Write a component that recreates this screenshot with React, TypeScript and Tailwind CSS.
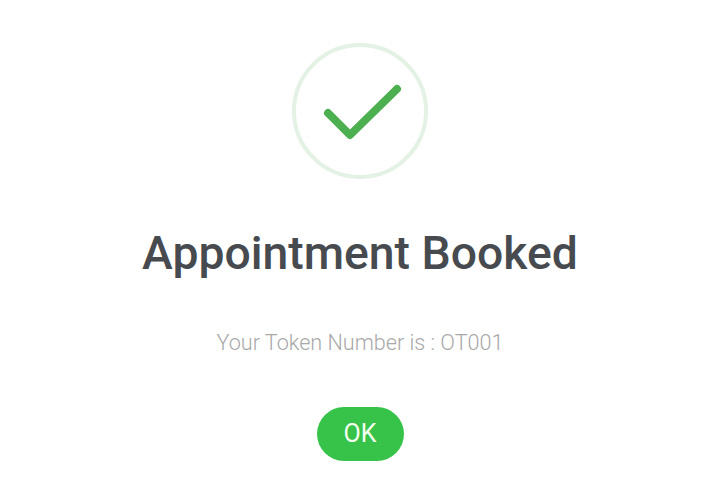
export default function App() {
  return (
    <div className="w-[720px] h-[498px] bg-white flex flex-col items-center pt-[43px] font-['Roboto',sans-serif]">
      <div className="w-[136px] h-[136px] rounded-full border-[4px] border-[#e3f2e4] flex items-center justify-center">
        <svg width="128" height="128" viewBox="0 0 128 128" fill="none" className="shrink-0">
          <path d="M32 66 L54 88 L101 42" stroke="#4caf50" strokeWidth="8" strokeLinecap="round" strokeLinejoin="round" />
        </svg>
      </div>
      <h1 className="mt-[47px] text-[46.3px] leading-[54px] font-medium text-[#474b4f]">Appointment Booked</h1>
      <p className="mt-[50px] text-[21.6px] leading-[26px] font-light text-[#a8a8a8]">Your Token Number is : OT001</p>
      <button className="mt-[51px] w-[87px] h-[54px] rounded-full bg-[#37c24a] text-[#f4fff0] text-[25px] font-normal flex items-center justify-center">OK</button>
    </div>
  );
}
